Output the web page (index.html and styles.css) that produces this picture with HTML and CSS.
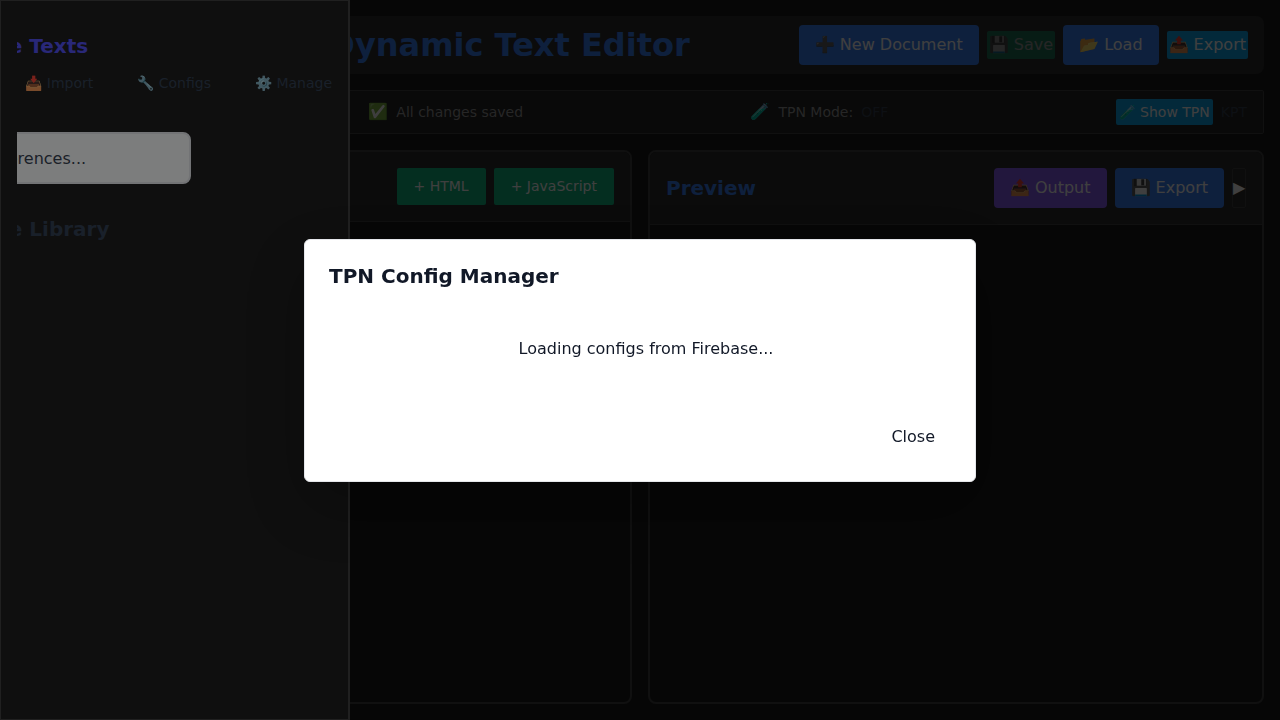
FILE: index.html
```html
<!DOCTYPE html>
<html lang="en">
<head>
<meta charset="utf-8">
<title>Dynamic Text Editor</title>
<link rel="stylesheet" href="styles.css">
</head>
<body>
<div class="app">
  <header class="topbar">
    <h1 class="app-title">Dynamic Text Editor</h1>
    <div class="actions">
      <button class="btn btn-primary">➕ New Document</button>
      <button class="btn btn-compact btn-success" disabled>💾 Save</button>
      <button class="btn btn-primary">📂 Load</button>
      <button class="btn btn-compact btn-info">📤 Export</button>
    </div>
  </header>

  <section class="status">
    <div class="status-lead"></div>
    <div class="status-item"><span class="status-icon">✅</span><span>All changes saved</span></div>
    <div class="status-item"><span class="status-icon">🧪</span><span>TPN Mode:</span><span class="muted">OFF</span></div>
    <div class="status-item">
      <button class="btn btn-compact btn-info btn-text">🧪 Show TPN</button>
      <span class="muted">KPT</span>
    </div>
  </section>

  <main class="panels">
    <section class="panel">
      <div class="panel-head panel-head-end">
        <button class="btn btn-small btn-success">+ HTML</button>
        <button class="btn btn-small btn-success">+ JavaScript</button>
      </div>
    </section>
    <section class="panel">
      <div class="panel-head">
        <h2 class="panel-title">Preview</h2>
        <div class="actions">
          <button class="btn btn-purple">📤 Output</button>
          <button class="btn btn-primary">💾 Export</button>
          <button class="btn btn-toggle" aria-label="Expand">▶</button>
        </div>
      </div>
    </section>
  </main>
</div>

<div class="backdrop"></div>

<aside class="drawer">
  <div class="drawer-view">
    <div class="drawer-content">
      <h2 class="drawer-title drawer-title-main">Reference Texts</h2>
      <div class="drawer-actions">
        <button class="link-btn">📥 Import</button>
        <button class="link-btn">🔧 Configs</button>
        <button class="link-btn">⚙️ Manage</button>
      </div>
      <input class="search" type="text" placeholder="Search references..." aria-label="Search references">
      <h2 class="drawer-title">Reference Library</h2>
    </div>
  </div>
</aside>

<div class="backdrop modal-layer">
  <div class="modal" role="dialog" aria-labelledby="modal-title">
    <h2 class="modal-title" id="modal-title">TPN Config Manager</h2>
    <div class="loading"><span class="spinner"></span><span>Loading configs from Firebase...</span></div>
    <div class="modal-foot"><button class="btn btn-ghost">Close</button></div>
  </div>
</div>
</body>
</html>
```

FILE: styles.css
```css
* { box-sizing: border-box; }

body {
  margin: 0;
  background: #1a1a1a;
  color: #999;
  font-family: "DejaVu Sans", sans-serif;
  font-size: 16px;
  line-height: 24px;
}

h1, h2 { margin: 0; }

.app {
  display: flex;
  flex-direction: column;
  gap: 16px;
  min-height: 100vh;
  padding: 16px;
}

.topbar {
  display: flex;
  align-items: center;
  gap: 109px;
  min-height: 58px;
  padding: 8px 16px;
  background: #2d2d2d;
  border-radius: 8px;
}

.app-title {
  flex: 1;
  color: #3b82f6;
  font-size: 32px;
  line-height: 40px;
  text-align: right;
  white-space: nowrap;
}

.actions { display: flex; align-items: center; gap: 8px; }

.btn {
  padding: 8px 16px;
  border: 0;
  border-radius: 4px;
  color: #fff;
  font: inherit;
  white-space: nowrap;
}
.btn-primary { background: #3b82f6; }
.btn-success { background: #10b981; }
.btn-info { background: #0ea5e9; }
.btn-purple { background: #8b5cf6; }
.btn-compact { padding: 2px; border-radius: 2px; }
.btn-text { padding: 1px 3px; font-size: 14px; }
.btn-small { padding: 8px 17px; border-radius: 2px; font-size: 14px; line-height: 21px; }
.btn:disabled { opacity: .5; }
.btn-toggle {
  align-self: stretch;
  width: 14px;
  padding: 0;
  border: 1px solid #404040;
  border-radius: 2px;
  background: transparent;
}

.status {
  display: flex;
  align-items: center;
  justify-content: space-between;
  min-height: 44px;
  padding: 8px 16px;
  border: 1px solid #404040;
  border-radius: 2px;
  background: #242424;
  font-size: 14px;
}
.status-lead { width: 108px; }
.status-item { display: flex; align-items: center; gap: 8px; }
.status-icon { font-size: 16px; }
.muted { color: #374151; }

.panels {
  flex: 1;
  display: grid;
  grid-template-columns: 1fr 1fr;
  gap: 16px;
}
.panel {
  overflow: hidden;
  border: 2px solid #404040;
  border-radius: 8px;
}
.panel-head {
  display: flex;
  align-items: center;
  justify-content: space-between;
  gap: 8px;
  padding: 16px;
  border-bottom: 1px solid #404040;
  background: #2d2d2d;
}
.panel-head-end { justify-content: flex-end; }
.panel-title { color: #3b82f6; font-size: 20px; }

.backdrop {
  position: fixed;
  inset: 0;
  background: rgba(0, 0, 0, .5);
}

.drawer {
  position: fixed;
  inset: 0 auto 0 0;
  width: 350px;
  padding: 33px 16px;
  border: 1px solid #404040;
  border-right-width: 2px;
  background: #1e1e1e;
}
.drawer-view { overflow: hidden; }
.drawer-content {
  display: flex;
  flex-direction: column;
  margin-left: -109px;
}
.drawer-title { color: #334155; font-size: 20px; }
.drawer-title-main { color: #5350f0; }
.drawer-actions {
  display: flex;
  justify-content: flex-end;
  gap: 44px;
  margin: 15px 0 39px;
}
.link-btn {
  padding: 0;
  border: 0;
  background: none;
  color: #334155;
  font: inherit;
  font-size: 14px;
  line-height: 20px;
}
.search {
  width: 283px;
  height: 52px;
  margin-bottom: 33px;
  padding: 12px 16px;
  border: 2px solid #e5e7eb;
  border-radius: 8px;
  background: #f9fafb;
  color: #374151;
  font: inherit;
}
.search::placeholder { color: #374151; opacity: 1; }

.modal-layer {
  display: flex;
  align-items: center;
  justify-content: center;
  padding: 16px;
}
.modal {
  width: 100%;
  max-width: 672px;
  padding: 24px;
  border: 1px solid #e5e7eb;
  border-radius: 6px;
  background: #fff;
  color: #111827;
  box-shadow: 0 24px 64px rgba(0, 0, 0, .25);
}
.modal-title { font-size: 20px; }
.loading {
  display: flex;
  justify-content: center;
  gap: 12px;
  padding: 49px 0 56px;
}
.modal-foot { display: flex; justify-content: flex-end; }
.btn-ghost { background: none; color: #111827; }
```
